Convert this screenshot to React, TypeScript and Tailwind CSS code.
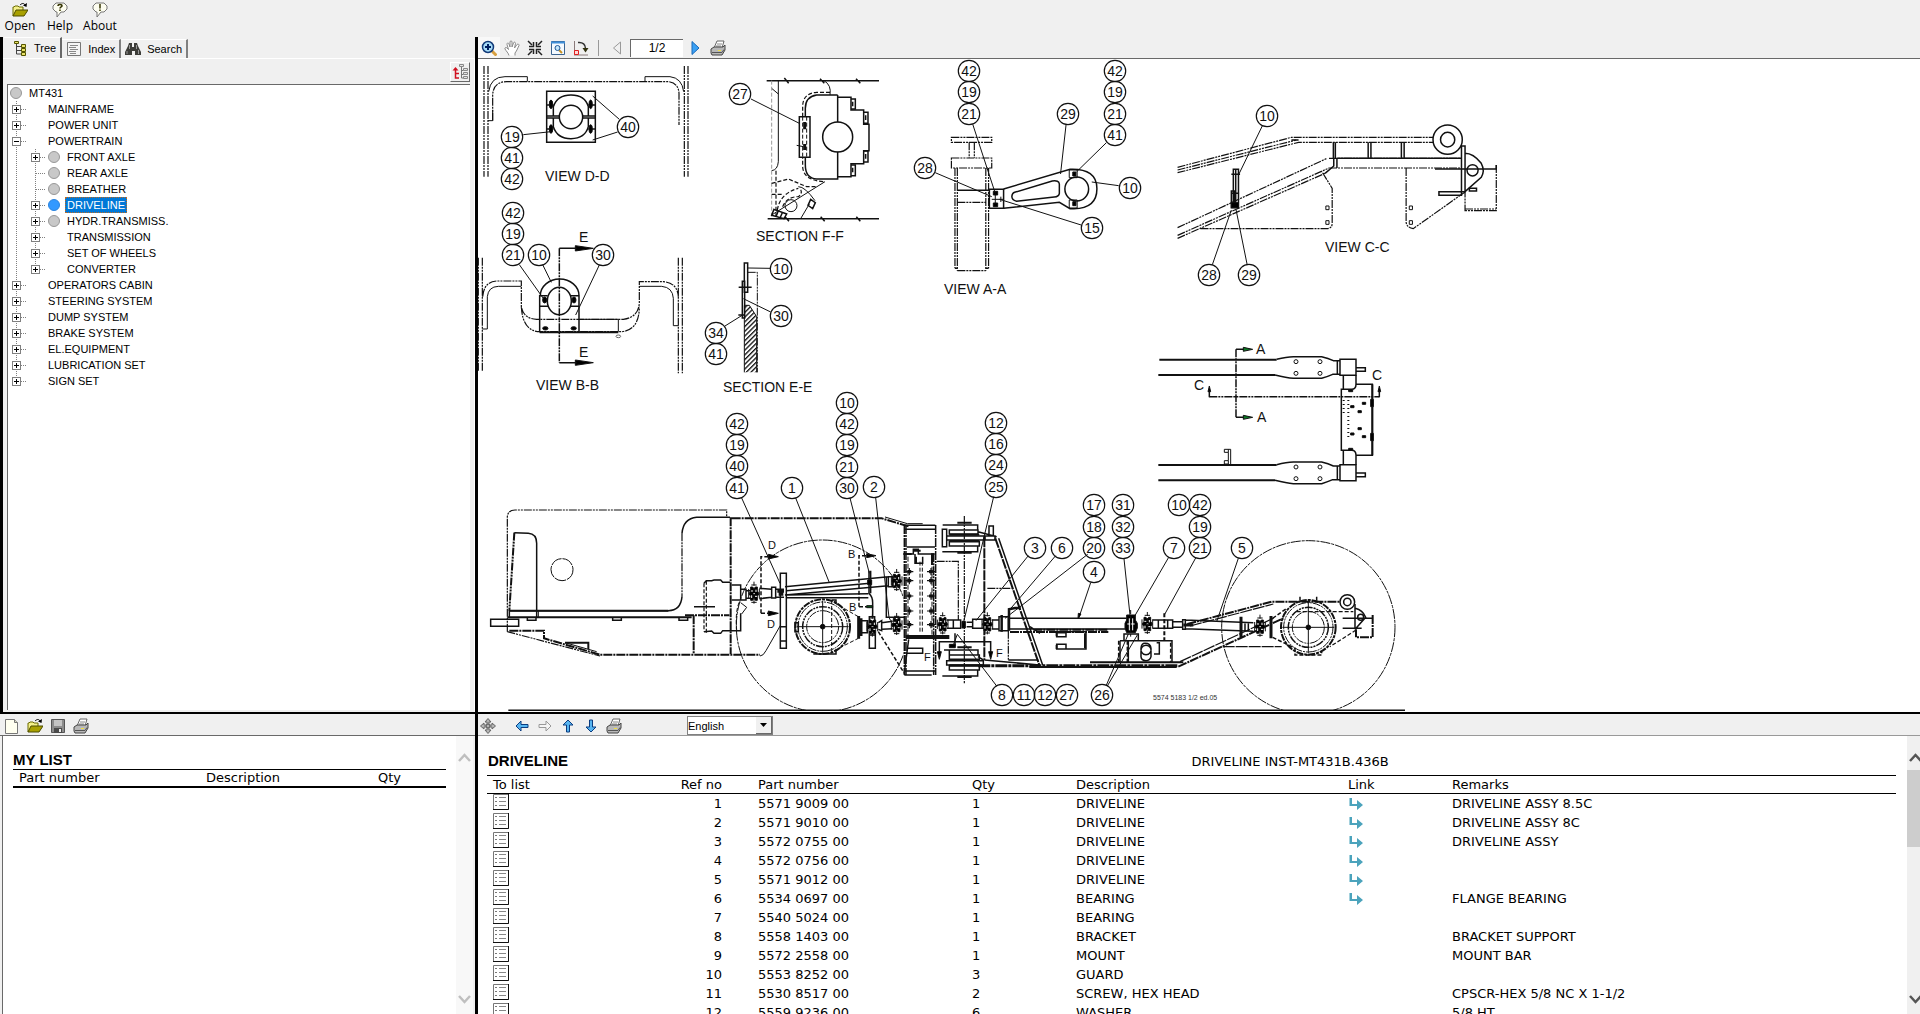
import type { ReactNode } from 'react'

type Node = { label: string; icon?: boolean; selected?: boolean; toggle?: '+' | '-'; children?: Node[] }

const tree: Node[] = [
  { label: 'MAINFRAME', toggle: '+' },
  { label: 'POWER UNIT', toggle: '+' },
  {
    label: 'POWERTRAIN',
    toggle: '-',
    children: [
      { label: 'FRONT AXLE', toggle: '+', icon: true },
      { label: 'REAR AXLE', icon: true },
      { label: 'BREATHER', icon: true },
      { label: 'DRIVELINE', toggle: '+', icon: true, selected: true },
      { label: 'HYDR.TRANSMISS.', toggle: '+', icon: true },
      { label: 'TRANSMISSION', toggle: '+' },
      { label: 'SET OF WHEELS', toggle: '+' },
      { label: 'CONVERTER', toggle: '+' },
    ],
  },
  { label: 'OPERATORS CABIN', toggle: '+' },
  { label: 'STEERING SYSTEM', toggle: '+' },
  { label: 'DUMP SYSTEM', toggle: '+' },
  { label: 'BRAKE SYSTEM', toggle: '+' },
  { label: 'EL.EQUIPMENT', toggle: '+' },
  { label: 'LUBRICATION SET', toggle: '+' },
  { label: 'SIGN SET', toggle: '+' },
]

const parts = [
  { ref: 1, no: '5571 9009 00', qty: 1, desc: 'DRIVELINE', link: true, remarks: 'DRIVELINE ASSY 8.5C' },
  { ref: 2, no: '5571 9010 00', qty: 1, desc: 'DRIVELINE', link: true, remarks: 'DRIVELINE ASSY 8C' },
  { ref: 3, no: '5572 0755 00', qty: 1, desc: 'DRIVELINE', link: true, remarks: 'DRIVELINE ASSY' },
  { ref: 4, no: '5572 0756 00', qty: 1, desc: 'DRIVELINE', link: true, remarks: '' },
  { ref: 5, no: '5571 9012 00', qty: 1, desc: 'DRIVELINE', link: true, remarks: '' },
  { ref: 6, no: '5534 0697 00', qty: 1, desc: 'BEARING', link: true, remarks: 'FLANGE BEARING' },
  { ref: 7, no: '5540 5024 00', qty: 1, desc: 'BEARING', link: false, remarks: '' },
  { ref: 8, no: '5558 1403 00', qty: 1, desc: 'BRACKET', link: false, remarks: 'BRACKET SUPPORT' },
  { ref: 9, no: '5572 2558 00', qty: 1, desc: 'MOUNT', link: false, remarks: 'MOUNT BAR' },
  { ref: 10, no: '5553 8252 00', qty: 3, desc: 'GUARD', link: false, remarks: '' },
  { ref: 11, no: '5530 8517 00', qty: 2, desc: 'SCREW, HEX HEAD', link: false, remarks: 'CPSCR-HEX 5/8 NC X 1-1/2' },
  { ref: 12, no: '5559 9236 00', qty: 6, desc: 'WASHER', link: false, remarks: '5/8 HT' },
]

/* ---------- icons ---------- */

function Icon({ children }: { children: ReactNode }) {
  return (
    <svg className="w-4 h-4 shrink-0" viewBox="0 0 16 16" fill="none" aria-hidden="true">
      {children}
    </svg>
  )
}

const FolderIcon = () => (
  <Icon>
    <path d="M1 14V5h1l1-1h3l1 1h4v3" fill="#f4f08a" stroke="#6b6b00" />
    <path d="M1 14 4 8h12l-4 6z" fill="#a8a000" stroke="#4d4d00" />
    <path d="M8 3c2-2 4-2 5 0" stroke="#000" />
    <path d="m15 1-.5 4L11 3.500z" fill="#000" />
  </Icon>
)

function BubbleIcon({ mark }: { mark: '?' | '!' }) {
  return (
    <Icon>
      <path d="M4 1h8l3 3v3l-3 3H9l-4 5V10H4L1 7V4z" fill="#fdfdf0" stroke="#777" />
      {mark === '?' ? (
        <path d="M6 4c0-2 4-2 4 0 0 1-2 1-2 2.500M8 7.500V9" stroke="#333300" strokeWidth="1.500" />
      ) : (
        <path d="M8 2v4.500M8 7.500V9" stroke="#333300" strokeWidth="1.500" />
      )}
    </Icon>
  )
}

const TreeIcon = () => (
  <Icon>
    <path d="M4.500 4v10H10M4.500 6.500H10M4.500 10.500H10" stroke="#444" />
    <path d="M2.500 1.500h4v2h-4zM9.500 4.500h4v3h-4zM9.500 8.500h4v3h-4zM9.500 12.500h4v3h-4z" fill="#e8e26a" stroke="#555500" />
  </Icon>
)

const IndexIcon = () => (
  <Icon>
    <path d="M1.500 1.500h13v13h-13z" fill="#f4f4f4" stroke="#777" />
    <path d="M4 4.500h8M3 6.500h7M4 8.500h8M3 10.500h7M4 12.500h6" stroke="#888" />
  </Icon>
)

const BinocularsIcon = () => (
  <Icon>
    <path d="M4 2h3v4h2V2h3l1 3 3 6v3h-6v-4H7v4H0v-3l3-6z" fill="#3c3c38" />
    <path d="M4.500 4v4M11.500 4v4M2 10v3M13.500 9v4" stroke="#999" />
  </Icon>
)

const SyncTreeIcon = () => (
  <Icon>
    <path d="M9.500 3v11h2M9.500 6.500h2M9.500 10.500h2" stroke="#777" />
    <path d="M7.500.500h4v2h-4zM11.500 4.500h4v2h-4zM11.500 8.500h4v2h-4zM11.500 12.500h4v2h-4z" fill="#e4e4e4" stroke="#888" />
    <path d="M3.500 6v8H7M3.500 9.500H7" stroke="#d01020" strokeWidth="1.500" />
    <path d="M3.500 3 6.500 6.500h-6z" fill="#d01020" />
  </Icon>
)

const ZoomIcon = () => (
  <Icon>
    <path d="m10.500 10.500 5 5" stroke="#d8a040" strokeWidth="3" />
    <circle cx="7" cy="7" r="5.500" fill="#a8dcf8" stroke="#123a78" strokeWidth="1.500" />
    <path d="M4 7h6M7 4v6" stroke="#001f60" strokeWidth="2" />
  </Icon>
)

const HandIcon = () => (
  <Icon>
    <path
      d="M5 15.500C4.500 13 2 11 1 9c-.500-1.500 1-2 2-1l1.500 1.500L3 4.500C2.500 3 4.500 2.500 5 4l1 3V2c0-1.500 2-1.500 2 0v5l1.500-4c.500-1.500 2-1 2 .500L10.500 8 13 4.500c1-1 2.500 0 2 1-1 2-2 5-4 7.500v2.500"
      fill="#fff"
      stroke="#8a8a8a"
    />
  </Icon>
)

const ShrinkIcon = () => (
  <Icon>
    <path d="m1 1 4 4M15 1l-4 4M1 15l4-4M15 15l-4-4" stroke="#222" strokeWidth="1.500" />
    <path d="M2 6.500h4.500V2M14 6.500H9.500V2M2 9.500h4.500V14M14 9.500H9.500V14" stroke="#222" strokeWidth="1.500" />
  </Icon>
)

const FitIcon = () => (
  <Icon>
    <path d="M1.500 1.500h13v13h-13z" fill="#f4faff" stroke="#3c6490" />
    <path d="M1 2.500h14" stroke="#3f8fd8" strokeWidth="2" />
    <path d="m9 10 3 3" stroke="#c89020" strokeWidth="2" />
    <circle cx="7.500" cy="8" r="2.500" fill="#c4e6fa" stroke="#205898" />
  </Icon>
)

const RotateIcon = () => (
  <Icon>
    <path d="M1.500 1v14M1 15h14" stroke="#8a7a7a" />
    <path d="M1.500 10.500h4v4h-4z" fill="#ffd8d8" stroke="#e02020" />
    <path d="M5 2.500c5-.500 7.500 2 7.500 6" stroke="#333" strokeWidth="1.500" />
    <path d="M9.500 8h6l-3 4.500z" fill="#333310" />
  </Icon>
)

const PrinterIcon = () => (
  <Icon>
    <path d="M4 8 7 1h7l-2 7" fill="#fff" stroke="#666" />
    <path d="M7 4h5M6 6h5" stroke="#888" />
    <path d="m1 9 3-2h9l2-2v5l-3 5H2l-1-2z" fill="#b8b8b8" stroke="#444" />
    <path d="M2 12.500h10l2-3" stroke="#555" />
    <path d="M8 10.500h3" stroke="#f0e040" />
  </Icon>
)

const NewIcon = () => (
  <Icon>
    <path d="M1.500 1.500h9l3 3v11h-12z" fill="#fffff0" stroke="#777" />
    <path d="M10.500 1.500v3h3" fill="#d8d8c0" stroke="#777" />
  </Icon>
)

const SaveIcon = () => (
  <Icon>
    <path d="M1.500 1.500h13v13h-13z" fill="#8c8c8c" stroke="#555" />
    <path d="M4 2h8v6H4z" fill="#c4c4c4" />
    <path d="M4 10h8v5H4z" fill="#4a4a4a" />
    <path d="M9 11h2v3H9z" fill="#eee" />
  </Icon>
)

const MoveIcon = () => (
  <Icon>
    <path d="M8 .500 11 4H9v3h3V5l3.500 3-3.500 3V9H9v3h2l-3 3.500L5 12h2V9H4v2L.500 8 4 5v2h3V4H5z" fill="#b4b4b4" stroke="#666" />
    <circle cx="8" cy="8" r="2" stroke="#666" />
  </Icon>
)

function ArrowIcon({ turn, off }: { turn: number; off?: boolean }) {
  return (
    <Icon>
      <path
        d="M2 8 7 3v3.500h7v3H7V13z"
        transform={`rotate(${turn} 8 8)`}
        fill={off ? '#f4f4f4' : '#56b4f0'}
        stroke={off ? '#999' : '#0a3c80'}
      />
    </Icon>
  )
}

const AddToListIcon = () => (
  <Icon>
    <path d="M.500.500h15v15H.500z" fill="#fff" stroke="#777" />
    <path d="M15.500 0v15.500H0" stroke="#111" />
    <path d="M6 3.500h7M6 7.500h7M6 11.500h7" stroke="#888" />
    <path d="M2 3.500h2M2 7.500h2M2 11.500h2" stroke="#777" />
  </Icon>
)

const LinkIcon = () => (
  <Icon>
    <path d="M1.500 2h2.500v6h5V4l6 5-6 5v-4H1.500z" fill="#4ba3bc" />
  </Icon>
)

function ScrollArrow({ down, color }: { down?: boolean; color: string }) {
  return (
    <svg className="w-[17px] h-4" viewBox="0 0 17 16" fill="none" aria-hidden="true">
      <path d={down ? 'm3 5 5.500 6L14 5' : 'm3 11 5.500-6L14 11'} stroke={color} strokeWidth="2.500" />
    </svg>
  )
}

function ToolButton({ label, children }: { label: string; children: ReactNode }) {
  return (
    <button type="button" aria-label={label} title={label} className="flex items-center justify-center w-[23px] h-5">
      {children}
    </button>
  )
}

/* ---------- tree ---------- */

function Connector({ toggle, last }: { toggle?: '+' | '-'; last?: boolean }) {
  return (
    <svg className="w-[19px] h-4 shrink-0" viewBox="0 0 19 16" fill="none" shapeRendering="crispEdges" aria-hidden="true">
      <path d={last ? 'M8.500 0v8' : 'M8.500 0v16'} stroke="#808080" strokeDasharray="1 1" />
      <path d="M9 8.500h10" stroke="#808080" strokeDasharray="1 1" />
      {toggle && (
        <>
          <path d="M4.500 4.500h8v8h-8z" fill="#fff" stroke="#808080" />
          <path d="M6 8.500h5" stroke="#000" />
          {toggle === '+' && <path d="M8.500 6v5" stroke="#000" />}
        </>
      )}
    </svg>
  )
}

function NodeIcon({ selected }: { selected?: boolean }) {
  return (
    <svg className="w-[19px] h-4 shrink-0" viewBox="0 0 19 16" aria-hidden="true">
      <circle cx="8" cy="8" r="5.500" fill={selected ? '#3399ff' : '#c8c8c8'} stroke={selected ? '#2a84e0' : '#989898'} />
    </svg>
  )
}

function TreeRow({ node, depth, last }: { node: Node; depth: number; last: boolean }) {
  return (
    <li role="treeitem" aria-selected={!!node.selected} aria-expanded={node.toggle ? node.toggle === '-' : undefined}>
      <div className="flex items-center h-4">
        {depth > 0 && (
          <svg className="w-[19px] h-4 shrink-0" viewBox="0 0 19 16" shapeRendering="crispEdges" aria-hidden="true">
            <path d="M8.500 0v16" stroke="#808080" strokeDasharray="1 1" />
          </svg>
        )}
        <Connector toggle={node.toggle} last={last} />
        {node.icon ? <NodeIcon selected={node.selected} /> : <span className="w-[19px]" />}
        <span
          className={
            node.selected
              ? 'h-4 leading-4 px-0.5 bg-[#0078d7] text-white outline-1 -outline-offset-1 outline-dotted outline-[#c06a20]'
              : 'h-4 leading-4 px-0.5'
          }
        >
          {node.label}
        </span>
      </div>
      {node.children && (
        <ul role="group">
          {node.children.map((c, i) => (
            <TreeRow key={c.label} node={c} depth={depth + 1} last={i === node.children!.length - 1} />
          ))}
        </ul>
      )}
    </li>
  )
}

/* ---------- drawing ---------- */

const balloons: [number, number, number][] = [
  [19, 512, 137], [41, 512, 158], [42, 512, 179], [40, 628, 127],
  [42, 513, 213], [19, 513, 234], [21, 513, 255], [10, 539, 255], [30, 603, 255],
  [27, 740, 94],
  [10, 781, 269], [30, 781, 316], [34, 716, 333], [41, 716, 354],
  [42, 969, 71], [19, 969, 92], [21, 969, 114], [29, 1068, 114],
  [42, 1115, 71], [19, 1115, 92], [21, 1115, 114], [41, 1115, 135],
  [28, 925, 168], [10, 1130, 188], [15, 1092, 228],
  [10, 1267, 116], [28, 1209, 275], [29, 1249, 275],
  [42, 737, 424], [19, 737, 445], [40, 737, 466], [41, 737, 488],
  [1, 792, 488],
  [10, 847, 403], [42, 847, 424], [19, 847, 445], [21, 847, 467], [30, 847, 488],
  [2, 874, 487],
  [12, 996, 423], [16, 996, 444], [24, 996, 465], [25, 996, 487],
  [3, 1035, 548], [6, 1062, 548],
  [17, 1094, 505], [18, 1094, 527], [20, 1094, 548], [4, 1094, 572],
  [31, 1123, 505], [32, 1123, 527], [33, 1123, 548],
  [7, 1174, 548], [10, 1179, 505], [42, 1200, 505], [19, 1200, 527], [21, 1200, 548],
  [5, 1242, 548],
  [8, 1002, 695], [11, 1024, 695], [12, 1045, 695], [27, 1067, 695], [26, 1102, 695],
]

const PHANTOM = '8 1 2 1 2 1'
const DASH = '4 2'

function SectionViews() {
  return (
    <g transform="translate(470 30) scale(.33333)">
      {/* D-D */}
      <path strokeDasharray={PHANTOM} strokeWidth="1.200" d="M42 108V440M54 108V440M643 108V440M654 108V440M68 272V195Q70 155 110 155H595Q625 158 627 190V285" />
      <path d="M54 272H68V240M56 185Q62 140 105 140H172V155M525 155V140H600Q636 144 641 185" />
      <path strokeWidth="1.500" d="M230 184H376V337H230ZM230 258H268M338 258H376M230 264H268M338 264H376M230 225H250M355 225H376M230 297H250M355 297H376" />
      <path strokeWidth="1.500" d="M250 258V230Q262 195 303 195Q345 195 355 230V258M250 264V290Q262 326 303 326Q345 326 355 290V264" />
      <circle cx="303" cy="261" r="35" fill="#fff" strokeWidth="1.500" />
      <g fill="#000">
        <ellipse cx="243" cy="223" rx="5" ry="13" />
        <ellipse cx="362" cy="223" rx="5" ry="13" />
        <ellipse cx="243" cy="297" rx="5" ry="13" />
        <ellipse cx="362" cy="297" rx="5" ry="13" />
      </g>
      <path d="M160 314 243 305M448 268 368 198M443 306 368 330" />

      {/* B-B */}
      <path strokeDasharray={PHANTOM} strokeWidth="1.200" d="M25 683V1025M37 683V1025M625 683V1030M637 683V1030M38 800Q42 755 80 753H154V830Q160 866 200 868H460Q505 862 508 820V755H580Q622 758 625 800M154 830Q158 905 210 905H455Q508 900 508 830" />
      <path d="M37 897H52V800Q55 770 85 769H154M508 769H575Q608 772 610 805V887H625M330 868H445V905" />
      <path strokeWidth="2" d="M209 907H445" />
      <path strokeWidth="1.500" d="M209 907V797H233M302 797H327V907M211 797A58 50 0 0 1 327 797M209 829H235M302 829H327" />
      <ellipse cx="268" cy="813" rx="36" ry="41" strokeWidth="1.500" />
      <g fill="#000">
        <ellipse cx="224" cy="810" rx="6" ry="9" />
        <ellipse cx="312" cy="810" rx="6" ry="9" />
        <ellipse cx="226" cy="895" rx="8" ry="5" />
        <ellipse cx="311" cy="895" rx="8" ry="5" />
        <path d="M316 647 370 655 316 663ZM316 990 370 998 316 1006Z" />
      </g>
      <path strokeDasharray={PHANTOM} strokeWidth="1.500" d="M268 655V998" />
      <path strokeWidth="1.500" d="M268 655H320M268 998H320" />
      <ellipse cx="445" cy="919" rx="7" ry="4" stroke="#666" />
      <path d="M148 704 222 808M218 704 244 757M388 705 317 855" />

      {/* F-F */}
      <path strokeWidth="1.500" d="M890 152H1227M893 566H1227M943 144 956 160M1050 146 1063 160M1158 146 1171 160M945 560 957 574M1052 560 1064 574M1159 560 1171 574" />
      <path d="M925 152V395Q923 420 905 422M905 175 925 192M1062 152Q1085 165 1080 195" />
      <path strokeDasharray={DASH} stroke="#999" d="M905 152V566" />
      <path strokeDasharray={DASH} strokeWidth="1.200" d="M918 422V560M1080 187H1040Q998 190 998 230V410Q1000 452 1064 455" />
      <path strokeWidth="1.500" d="M1103 195H1040Q1006 200 1006 235V405Q1006 445 1040 447H1103V365M1103 277V195M1103 202H1143V240H1181V283H1197V362H1181V401H1143V440H1103" />
      <path strokeWidth="1.500" d="M1143 207h13v30h-13M1181 247h13v33h-13M1181 363h13v33h-13M1143 405h13v32h-13M1148 215v14M1187 256v14M1187 372v14M1148 413v14" />
      <circle cx="1103" cy="321" r="45" strokeWidth="1.500" />
      <path d="M988 260H1020V382H988Z" fill="#fff" strokeWidth="1.500" />
      <path strokeDasharray={DASH} d="M998 260V382M1010 260V382" />
      <path strokeWidth="3" d="M1004 276V298M1004 342V360" />
      <path d="M843 207 988 280M1065 455 905 555M985 470Q1005 470 1035 512M1018 522 992 566M980 346 1000 350" />
      <path strokeDasharray={DASH} strokeWidth="1.200" d="M905 460 955 447 1010 470H1040M905 493H940M922 540Q930 490 985 475M938 530Q950 500 985 500Q1000 490 990 475" />
      <circle cx="963" cy="527" r="18" />
      <path strokeWidth="1.500" d="M1022 508 1036 518 1028 536 1014 526ZM912 538 950 552 942 566 905 556ZM925 542 918 560M938 546 930 564" />

      {/* E-E */}
      <path strokeWidth="1.500" d="M823 699H833V787H823ZM817 754H824V864H817ZM806 772H845M805 855H826" />
      <path strokeDasharray={PHANTOM} d="M833 727H862V1027" />
      <path d="M823 1027V826H838L860 860V1027" fill="url(#hatch)" />
      <path d="M900 715 833 714M902 846 820 806M765 888 818 855" />
    </g>
  )
}

function ArmViews() {
  return (
    <g transform="translate(900 40) scale(.39541 .33333)">
      {/* A-A */}
      <path strokeDasharray={PHANTOM} strokeWidth="1.200" d="M130 292H232V307H130ZM130 354H232V384H130ZM139 384V685M145 384V692M217 384V692M224 384V685M145 692H217M145 487H217M175 307V354M188 307V354" />
      <path strokeWidth="1.500" d="M145 451H228M226 448H262V505H226ZM139 685H145M217 685H224" />
      <path strokeWidth="1.500" d="M262 447 430 388Q498 385 498 446Q498 505 440 506H430L403 487 262 505M290 457 385 423Q402 420 403 432V460Q402 470 390 471L295 484Q282 480 283 468Q284 459 290 457Z" />
      <ellipse cx="447" cy="447" rx="30" ry="36" strokeWidth="1.500" />
      <path d="M428 390H448V413H428ZM428 480H448V504H428ZM232 478H262M241 465V490M255 470V486" />
      <path fill="#000" d="M437 396h8v12h-8zM437 485h8v12h-8zM236 454h11v11h-11zM236 489h11v11h-11z" />
      <path d="M184 253 241 460M89 398 232 470M420 254 406 402M522 308 447 395M553 437 485 426M458 555 252 478" />

      {/* C-C */}
      <path strokeDasharray={PHANTOM} strokeWidth="1.200" d="M702 382 990 292H1350M702 390 1002 300M702 398 1008 307H1350M702 563 1080 355M702 586 1085 384M702 595 1075 400M1085 355H1420M1085 384H1420M760 566H1080Q1093 565 1093 550V445L1067 395M1280 384V545Q1280 562 1298 566L1430 455M1508 375V512H1429V455M1429 507H1508" />
      <path strokeWidth="1.500" d="M1096 307V355M1101 307V355M1184 307V355M1191 307V355M1268 307V355M1275 307V355M1105 355V384M1075 400 1097 378V355M990 300H1008M1105 355H1420M1353 387H1508V375M1363 455H1420V466H1363ZM1440 445H1458V453H1440Z" />
      <path d="M1077 498h8v11h-8zM1077 542h8v11h-8zM1288 498h8v11h-8zM1288 542h8v11h-8z" />
      <ellipse cx="1385" cy="299" rx="37" ry="44" fill="#fff" strokeWidth="1.500" />
      <ellipse cx="1385" cy="299" rx="18" ry="22" strokeWidth="1.500" />
      <path strokeWidth="1.500" d="M1420 318H1429V455H1420ZM1429 340Q1450 340 1470 370Q1480 392 1470 412L1429 455" />
      <ellipse cx="1448" cy="391" rx="14" ry="17" strokeWidth="1.500" />
      <path strokeWidth="1.500" d="M843 388H856V503H843ZM849 388V503M838 403H860M838 453H846V503H838ZM838 460H858" />
      <path fill="#000" d="M838 488H856V503H838Z" />
      <path d="M917 256 856 405M790 674 838 510M878 674 850 510" />
    </g>
  )
}

function PlanView() {
  const beam =
    'M410 88Q440 80 460 80H545Q565 85 580 92H600M405 135Q440 144 460 145H545Q562 140 578 133H600M592 92H600V133H592ZM600 88H648V136H600ZM648 113H676V124H648Z'
  return (
    <g transform="translate(1140 330) scale(.33333)">
      <path strokeWidth="2" d="M58 89H410M55 135H405M55 405H410M55 451H405" />
      <path strokeWidth="1.500" d={beam} />
      <path strokeWidth="1.500" d={beam} transform="translate(0 316)" />
      {[95, 130, 411, 446].map(y => (
        <g key={y}>
          <circle cx="468" cy={y} r="6" />
          <circle cx="540" cy={y} r="6" />
        </g>
      ))}
      <path strokeWidth="1.500" d="M610 136V178M648 136V163M610 361V404M648 376V404M604 178H635Q648 178 648 163H697V376H648Q648 361 635 361H604Z" />
      <path strokeWidth="2" d="M697 163V376" />
      <path fill="#000" d="M626 180h12v5h-12zM626 355h12v5h-12zM667 217h10v6h-10zM632 227h10v6h-10zM654 242h10v6h-10zM654 293h10v6h-10zM632 309h10v6h-10zM667 317h10v6h-10zM692 208h8v22h-8zM692 310h8v22h-8z" />
      <path strokeWidth="2" strokeDasharray="1 3" d="M625 210V330M611 210V256" />
      <path d="M253 358H272V402M253 358V367H265V358M253 392H265V402H253ZM265 367V392" />
      <path strokeDasharray={PHANTOM} strokeWidth="1.500" d="M288 58V262M208 200H718" />
      <path strokeWidth="1.500" d="M288 58H312M288 262H312M208 202V180M718 202V180" />
      <path fill="#0a7a24" d="M310 52 338 58 310 64ZM310 256 338 262 310 268Z" />
      <path fill="#000" d="M204 185 208 168 212 185ZM714 185 718 168 722 185Z" />
    </g>
  )
}

function Bolt({ x, y }: { x: number; y: number }) {
  return <path strokeWidth="1.200" d={`M${x - 12} ${y}h24M${x} ${y - 11}v22M${x - 4} ${y - 3}h8v6h-8z`} />
}

// universal joint as seen from the side
function Joint({ x, y }: { x: number; y: number }) {
  return (
    <g>
      <path fill="#000" d={`M${x - 10} ${y - 20}h6l4 6 4-6h6v12l5 8-5 8v12h-6l-4-6-4 6h-6v-12l-5-8 5-8z`} />
      <path stroke="#fff" d={`M${x - 9} ${y - 8}h6M${x + 3} ${y + 8}h6M${x - 2} ${y}h5M${x + 6} ${y - 12}v7M${x - 7} ${y + 5}v8`} />
      <path d={`M${x} ${y - 36}V${y + 36}`} strokeDasharray={DASH} />
      <path d={`M${x - 8} ${y - 26}h16M${x - 8} ${y + 26}h16M${x - 16} ${y - 14}v28M${x + 16} ${y - 14}v28`} />
    </g>
  )
}

function AxleHub({ x, y }: { x: number; y: number }) {
  return (
    <g>
      <circle cx={x} cy={y} r="82" strokeWidth="2" strokeDasharray="7 1 3 1" />
      <circle cx={x} cy={y} r="74" strokeDasharray={PHANTOM} />
      <circle cx={x} cy={y} r="60" strokeDasharray={PHANTOM} strokeWidth="1.500" />
      <circle cx={x} cy={y} r="48" strokeDasharray={PHANTOM} />
      <circle cx={x} cy={y} r="7" fill="#000" />
      <path d={`M${x - 78} ${y}h156M${x} ${y - 78}v156`} />
    </g>
  )
}

function RearFrame() {
  return (
    <g transform="translate(470 380) scale(.33333)">
      <path strokeDasharray={PHANTOM} strokeWidth="1.200" d="M112 755V410Q114 390 135 390H770V412M636 460V650M112 755 390 828" />
      <path strokeDasharray={PHANTOM} strokeWidth="2" d="M133 458 118 692" />
      <path strokeWidth="1.500" d="M780 412H680Q640 416 636 460M636 650Q632 692 595 692H118V712M133 458 175 460Q200 462 200 490V712M62 718H146V739H62ZM172 712V721H198V712M428 712V721H454V712M627 712V721H653V712" />
      <path strokeWidth="2" d="M112 712H665M118 692H595" />
      <circle cx="276" cy="569" r="33" strokeDasharray="12 1" />
      <path strokeWidth="2" strokeDasharray="9 1 2 1" d="M118 752H222V775L390 824H870M645 706H778M671 706V822M782 412V822M785 415H1235L1318 440" />
      <path strokeWidth="2" d="M285 788H355V808" />
      <path d="M285 788 380 815M1245 411 1312 431H1358M870 828Q880 828 888 812L932 735M205 692V712" />

      {/* transmission */}
      <path strokeDasharray={DASH} strokeWidth="1.200" d="M702 610V755M709 602V760" />
      <path strokeWidth="1.500" d="M702 610 709 602H725L732 600H752L758 607H780M702 755 725 753 732 760H752L758 752H812V700M785 615H812V660H785M812 628H828V660H808M828 632H843M828 655H843M672 680H735" />
      <path strokeDasharray={DASH} d="M800 750Q795 690 810 662" />
      <path d="M812 668 830 682 815 702" />
      <Joint x={852} y={641} />
      <path strokeWidth="1.500" d="M868 625 905 628M868 656 905 652M905 622H917V654H905ZM917 628H942M917 652H942M931 580H949V805H931ZM931 740H949M931 783H949" />
      <path strokeWidth="3" d="M922 634H942M926 643H940" />
      <path strokeWidth="1.500" d="M945 620 1255 590M945 645 1255 617M949 632 1200 610M949 653H1195M949 645 1195 641M1255 590H1267V620H1255Z" />
      <Joint x={1280} y={603} />
      <path strokeDasharray={DASH} strokeWidth="1.500" d="M873 700V530H898M1167 680V527H1190M1167 680H1190M873 700H898" />
      <path fill="#000" d="M895 523 925 530 895 537ZM895 693 925 700 895 707ZM1190 521 1218 527 1190 533Z" />
      <path fill="#0a5a1a" d="M1190 677h18v6h-18z" />
      <path strokeWidth="1.500" d="M1197 572V640Q1208 650 1208 668V712M1202 572V640M1198 762H1216V805H1198ZM1198 710H1214V730H1198ZM1249 590V712H1303" />
      <path fill="#000" d="M1193 600h12v14h-12z" />

      {/* wheel */}
      <clipPath id="rearWheel">
        <path d="M780 460H1300V992H780Z" />
      </clipPath>
      <circle cx="1057" cy="738" r="258" strokeDasharray="10 1 3 1" clipPath="url(#rearWheel)" />
      <AxleHub x={1058} y={740} />
      <path strokeDasharray={DASH} d="M1085 660V820M1092 668 1165 710M1092 812 1165 775" />
      <path strokeWidth="1.500" d="M975 728H985V755H975ZM1030 822H1098V810M1085 660H1098V672" />
      <path strokeWidth="3" d="M1166 708V776M1173 715V768" />
      <path strokeWidth="1.500" d="M1175 722H1192V758H1175M1225 728 1235 722V752L1225 748M1235 728 1268 724M1235 748 1268 746" />
      <Joint x={1207} y={740} />
      <Joint x={1280} y={735} />
      <path strokeDasharray={DASH} strokeWidth="1.500" d="M1225 755 1303 880" />

      {/* articulation column */}
      <path strokeWidth="1.500" strokeDasharray="9 1 2 1" d="M1303 435V885M1308 435V885M1397 435V885M1391 520V885" />
      <path strokeDasharray={DASH} d="M1350 545V760M1357 545V760" />
      <path strokeWidth="1.500" d="M1303 436H1396M1303 448H1396M1310 501H1395M1303 522H1330V508H1345V522H1394M1303 885H1385M1303 873H1396M1310 805H1358V820H1310M1316 778 1303 878M1335 522V550H1358V530" />
      <path strokeWidth="2" d="M1300 522H1325M1330 512H1352M1338 530V550M1386 520V555" />
      <path strokeWidth="2" d="M1310 768H1435V774H1310Z" />
      {[575, 602, 648, 693, 734].map(y => (
        <g key={y}>
          <Bolt x={1318} y={y} />
          <Bolt x={1383} y={y} />
        </g>
      ))}
      <path strokeDasharray="5 2" d="M1314 530V765M1386 560V765" />

      <path d="M815 354 930 610M977 354 1078 608M1140 354 1198 580M1217 353 1257 712M1257 712 1262 722" />
      <path strokeWidth="1.500" d="M115 991H2805" />
    </g>
  )
}

function FrontFrame() {
  return (
    <g transform="translate(900 400) scale(.33333)">
      {/* hinge */}
      <path strokeDasharray={PHANTOM} strokeWidth="1.200" d="M193 348V850M110 484H175V660M262 565H335M325 692V780" />
      <path strokeWidth="1.500" d="M128 375H233V390M148 390H234V402H148ZM140 408H255V420H140ZM148 425H238V438H148ZM127 388H140V440H127ZM127 455H233V438M234 395 290 410M253 408H285V420H253ZM267 378H280V408H267ZM132 750H234V765H148V750M148 765H238V778H148ZM140 782H250V795H140ZM148 798H238V810H148ZM127 828H233V810M234 770 250 780" />
      <path strokeWidth="2" d="M172 368H215M172 458H215M172 742H215M172 831H215M148 404H238M148 423H238M148 780H238M148 796H238" />

      {/* mast and chassis */}
      <path strokeWidth="2" strokeDasharray="10 1" d="M286 415 418 795M253 412V780" />
      <path strokeWidth="1.500" d="M296 415 428 795M253 780 418 795M325 780H415" />
      <path strokeWidth="3" strokeDasharray="12 1 3 1" d="M235 797H835" />
      <path strokeWidth="2" d="M570 787H850M388 801H830" />
      <path strokeWidth="2" strokeDasharray="9 1 2 1" d="M835 800 1150 655M862 672 1115 605H1320" />
      <path strokeWidth="1.200" d="M840 785 1120 655M870 678 1120 612M968 740H1145" strokeDasharray="12 1" />

      {/* shafts */}
      <Joint x={128} y={673} />
      <Joint x={262} y={673} />
      <Joint x={742} y={672} />
      <Joint x={1080} y={680} />
      <path strokeWidth="1.500" d="M140 660H182V685H140M160 660V685M200 667H218M200 680H218M218 658H250V685H218ZM275 660H297M275 687H297M297 650H325V692H297ZM327 655H680M327 687H680M390 680 420 700" />
      <path strokeWidth="2.500" d="M327 692V628L345 624H362M305 645V695" />
      <path fill="#000" d="M186 664h10v20h-10z" />
      <path strokeWidth="2" strokeDasharray="9 1 2 1" d="M330 696H625M400 689H625" />
      <path strokeWidth="1.500" d="M470 695H558V747H470M470 698H498V710H470ZM470 733H498V747H470Z" />
      <path strokeWidth="2" d="M555 700V745M470 735V747M470 698V709" />
      <path fill="#000" d="M680 645h26v15l6 10v14l-6 14h-26l-5-14v-14l5-10z" />
      <path stroke="#fff" d="M688 655v36M698 655v36M682 672h22" />
      <path strokeDasharray={DASH} d="M692 630V710" />
      <path strokeWidth="1.500" d="M672 720V702H715V720M660 722H816V788M660 722V788M685 722V788M735 730Q752 730 753 745V770Q750 782 738 782Q724 782 723 770V745Q724 730 735 730ZM738 736A15 14 0 1 0 738.100 736M770 728H778V762H762" />
      <path strokeDasharray={DASH} strokeWidth="1.500" d="M656 722V788M682 722V788M812 728V788" />
      <path strokeWidth="1.500" d="M758 660H818V685H758M775 660V685M803 660V685M818 665H848M818 682H848M848 659H856V688H848ZM856 660 1060 668M856 686 1060 694M1035 668V694M1045 668V694" />
      <path strokeWidth="2" strokeDasharray={DASH} d="M793 640V722" />
      <path strokeWidth="3" d="M1023 650V712M1113 648V715M850 675H880" />

      {/* wheel */}
      <clipPath id="frontWheel">
        <path d="M950 400H1500V931H950Z" />
      </clipPath>
      <circle cx="1225" cy="682" r="260" strokeDasharray="10 1 3 1" clipPath="url(#frontWheel)" />
      <AxleHub x={1225} y={682} />
      <path strokeWidth="1.500" d="M1118 655 1160 625M1118 712 1185 745V765H1265V755M1200 590V605M1250 590V605" strokeDasharray={DASH} />
      <path strokeDasharray={DASH} d="M1190 635H1360M1368 690 1290 740" strokeWidth="1.200" />
      <circle cx="1342" cy="606" r="22" fill="#fff" strokeWidth="1.500" />
      <circle cx="1342" cy="606" r="11" strokeWidth="1.500" />
      <circle cx="1382" cy="652" r="9" strokeWidth="1.500" />
      <path strokeWidth="1.500" d="M1365 612V688M1366 625Q1388 630 1397 652L1368 685M1328 655H1418M1328 685H1385" />
      <path strokeWidth="2" strokeDasharray="9 1 2 1" d="M1418 645V712H1368V688" />

      <path strokeWidth="1.500" d="M118 760V725H272V760M165 700V735H150" />
      <path fill="#000" d="M112 755 118 778 124 755ZM266 755 272 778 278 755ZM148 733h18v10h-18z" />
      <path d="M281 290 190 670M385 467 228 662M467 467 330 628M563 463 315 655M572 548 536 655M672 476 690 645M806 472 703 650M887 474 793 645M1015 475 950 665M290 858 172 703 160 735M618 858 685 702M622 858 712 705" />
      <path fill="#000" d="M534 656 535 640 543 642Z" />
    </g>
  )
}

function Drawing() {
  return (
    <svg
      className="block w-full h-full font-['Liberation_Sans',Arial,sans-serif] [&_*]:[vector-effect:non-scaling-stroke]"
      viewBox="478 59 1442 652"
      preserveAspectRatio="xMinYMin meet"
      fill="none"
      stroke="#111"
      role="img"
      aria-label="Driveline exploded views"
    >
      <defs>
        <pattern id="hatch" width="10" height="10" patternUnits="userSpaceOnUse" patternTransform="rotate(45)">
          <path d="M0 0h4v10H0z" fill="#111" stroke="none" />
        </pattern>
      </defs>
      <SectionViews />
      <ArmViews />
      <PlanView />
      <RearFrame />
      <FrontFrame />

      {balloons.map(([n, x, y]) => (
        <g key={`${n}-${x}-${y}`}>
          <circle cx={x} cy={y} r="10.700" strokeWidth="1.200" />
          <text x={x} y={y + 5} fontSize="14" textAnchor="middle" fill="#111" stroke="none">
            {n}
          </text>
        </g>
      ))}

      <g fill="#111" stroke="none" fontSize="14">
        <text x="545" y="181">VIEW D-D</text>
        <text x="756" y="241">SECTION F-F</text>
        <text x="536" y="390">VIEW B-B</text>
        <text x="723" y="392">SECTION E-E</text>
        <text x="944" y="294">VIEW A-A</text>
        <text x="1325" y="252">VIEW C-C</text>
        <text x="579" y="242">E</text>
        <text x="579" y="357">E</text>
        <text x="1256" y="354">A</text>
        <text x="1257" y="422">A</text>
        <text x="1194" y="390">C</text>
        <text x="1372" y="380">C</text>
      </g>
      <g fill="#111" stroke="none" fontSize="11">
        <text x="768" y="549">D</text>
        <text x="767" y="628">D</text>
        <text x="848" y="558">B</text>
        <text x="849" y="611">B</text>
        <text x="924" y="661">F</text>
        <text x="996" y="657">F</text>
      </g>
      <text x="1153" y="700" fontSize="7" fill="#333" stroke="none">5574 5183 1/2 ed.05</text>
    </svg>
  )
}

/* ---------- page ---------- */

function LeftPane() {
  return (
    <aside className="flex flex-col w-[475px] shrink-0 border-l-[3px] border-black">
      <div role="tablist" className="flex items-end h-[22px] pl-px border-b border-white">
        <button type="button" role="tab" aria-selected="true" className="flex items-center gap-1.5 h-[21px] pl-2 pr-1 border-t border-t-white border-r-2 border-r-[#696969]">
          <TreeIcon />
          Tree
        </button>
        <button type="button" role="tab" aria-selected="false" className="flex items-center gap-1.5 h-[19px] px-1 border-t border-t-white border-r-2 border-r-[#808080]">
          <IndexIcon />
          Index
        </button>
        <button type="button" role="tab" aria-selected="false" className="flex items-center gap-1.5 h-[19px] px-1 border-t border-t-white border-r-2 border-r-[#808080]">
          <BinocularsIcon />
          Search
        </button>
      </div>
      <div className="flex flex-col flex-1 min-h-0 pl-1 pb-0.5 pr-1 border-r border-r-white">
        <div className="flex justify-end items-center h-[25px]">
          <button
            type="button"
            aria-label="Locate in tree"
            className="flex items-center justify-center w-5 h-5 border border-t-white border-l-white border-r-[#696969] border-b-[#696969]"
          >
            <SyncTreeIcon />
          </button>
        </div>
        <div className="flex-1 min-h-0 overflow-hidden bg-white border-t border-l border-[#696969]">
          <ul role="tree">
            <li role="treeitem">
              <div className="flex items-center h-4">
                <NodeIcon />
                <span className="px-0.5 leading-4">MT431</span>
              </div>
              <ul role="group">
                {tree.map((n, i) => (
                  <TreeRow key={n.label} node={n} depth={0} last={i === tree.length - 1} />
                ))}
              </ul>
            </li>
          </ul>
        </div>
      </div>
    </aside>
  )
}

function Viewer() {
  return (
    <section className="flex flex-col flex-1 min-w-0 border-l-[3px] border-black">
      <div className="flex items-center h-[22px] shrink-0 border-b border-[#696969]">
        <button type="button" aria-label="Zoom in" className="flex items-center justify-center w-[22px] h-[21px] bg-[#f8f8f8]">
          <ZoomIcon />
        </button>
        <ToolButton label="Pan"><HandIcon /></ToolButton>
        <ToolButton label="Fit"><ShrinkIcon /></ToolButton>
        <ToolButton label="Zoom window"><FitIcon /></ToolButton>
        <ToolButton label="Rotate"><RotateIcon /></ToolButton>
        <span className="w-px h-4 mx-1.5 bg-[#999]" />
        <ToolButton label="Previous sheet">
          <Icon><path d="M11.500 2v12L4.500 8z" fill="#f0f0f0" stroke="#999" /></Icon>
        </ToolButton>
        <input
          aria-label="Sheet"
          defaultValue="1/2"
          className="w-[53px] h-[18px] ml-0.5 bg-white text-center text-xs border-t border-l border-[#696969] outline-none"
        />
        <ToolButton label="Next sheet">
          <Icon><path d="M5 1.500v13l7-6.500z" fill="#3aa0f4" stroke="#1868b8" /></Icon>
        </ToolButton>
        <ToolButton label="Print"><PrinterIcon /></ToolButton>
      </div>
      <div className="flex-1 min-h-0 bg-white overflow-hidden">
        <Drawing />
      </div>
    </section>
  )
}

function MyList() {
  return (
    <section className="flex flex-col w-[475px] shrink-0">
      <div className="flex items-center h-[22px] shrink-0 pt-0.5 border-b border-[#696969]">
        <ToolButton label="New list"><NewIcon /></ToolButton>
        <ToolButton label="Open list"><FolderIcon /></ToolButton>
        <ToolButton label="Save list"><SaveIcon /></ToolButton>
        <ToolButton label="Print list"><PrinterIcon /></ToolButton>
      </div>
      <div className="flex flex-1 min-h-0 ml-0.5 mr-0.5 bg-white border-l border-[#696969]">
        <div className="flex-1 pl-2.5 pr-2.5 pt-[15px] font-['DejaVu_Sans',Verdana,sans-serif] text-[13px]">
          <h2 className="font-['Liberation_Sans',Arial,sans-serif] text-[15px] leading-[18px] font-bold">MY LIST</h2>
          <table className="w-full table-fixed border-t border-b-2 border-black">
            <thead>
              <tr>
                <th className="w-[187px] pl-1.5 text-left font-normal leading-4">Part number</th>
                <th className="w-[172px] pl-1.5 text-left font-normal leading-4">Description</th>
                <th className="pl-1.5 text-left font-normal leading-4">Qty</th>
              </tr>
            </thead>
          </table>
        </div>
        <div className="flex flex-col justify-between w-[17px] pt-3.5 pb-[7px] bg-[#f8f8f8]">
          <ScrollArrow color="#bfbfbf" />
          <ScrollArrow down color="#bfbfbf" />
        </div>
      </div>
    </section>
  )
}

function PartsList() {
  return (
    <section className="flex flex-col flex-1 min-w-0 border-l-[3px] border-black">
      <div className="flex items-center h-[22px] shrink-0 pt-0.5 border-b border-[#999]">
        <button type="button" aria-label="Move" className="flex items-center justify-center w-5 h-5">
          <MoveIcon />
        </button>
        <span className="w-3" />
        <ToolButton label="Back"><ArrowIcon turn={0} /></ToolButton>
        <ToolButton label="Forward"><ArrowIcon turn={180} off /></ToolButton>
        <ToolButton label="Up"><ArrowIcon turn={90} /></ToolButton>
        <ToolButton label="Down"><ArrowIcon turn={270} /></ToolButton>
        <ToolButton label="Print parts list"><PrinterIcon /></ToolButton>
        <div className="relative w-[86px] h-[19px] ml-[62px] bg-white border border-[#808080]">
          <select aria-label="Language" className="w-full h-full appearance-none outline-none text-[11px] leading-4 text-black">
            <option>English</option>
          </select>
          <span className="absolute right-0 top-0 flex items-center justify-center w-4 h-[17px] bg-[#f0f0f0] border-r border-b border-[#696969] pointer-events-none">
            <svg className="w-[7px] h-1" viewBox="0 0 7 4" aria-hidden="true"><path d="M0 0h7L3.500 4z" /></svg>
          </span>
        </div>
      </div>
      <div className="flex flex-1 min-h-0 bg-white">
        <div className="flex-1 min-w-0 overflow-hidden pl-[9px] pr-[11px] pt-4 font-['DejaVu_Sans',Verdana,sans-serif] text-[13px]">
          <div className="flex items-start h-[23px]">
            <h2 className="w-1/2 pl-px font-['Liberation_Sans',Arial,sans-serif] text-[15px] leading-[18px] font-bold">DRIVELINE</h2>
            <p className="leading-5">DRIVELINE INST-MT431B.436B</p>
          </div>
          <table className="w-full table-fixed border-collapse">
            <thead>
              <tr className="h-[18px] border-y border-black text-left leading-4 [&>th]:font-normal [&>th]:p-0">
                <th className="w-[100px]"><span className="pl-1.5">To list</span></th>
                <th className="w-[135px] text-right">Ref no</th>
                <th className="w-[250px]"><span className="pl-9">Part number</span></th>
                <th className="w-[104px]">Qty</th>
                <th className="w-[272px]">Description</th>
                <th className="w-[104px]">Link</th>
                <th>Remarks</th>
              </tr>
            </thead>
            <tbody>
              {parts.map(p => (
                <tr key={p.ref} className="h-[19px] leading-[19px]">
                  <td className="pl-1.5 align-top">
                    <button type="button" aria-label={`Add ${p.no} to list`} className="block">
                      <AddToListIcon />
                    </button>
                  </td>
                  <td className="text-right">{p.ref}</td>
                  <td className="pl-9">{p.no}</td>
                  <td>{p.qty}</td>
                  <td>{p.desc}</td>
                  <td>
                    {p.link && (
                      <a href={`#part-${p.ref}`} aria-label={`Open ${p.desc} ${p.no}`} className="block w-4">
                        <LinkIcon />
                      </a>
                    )}
                  </td>
                  <td>{p.remarks}</td>
                </tr>
              ))}
            </tbody>
          </table>
        </div>
        <div className="flex flex-col w-[13px] overflow-hidden pt-3.5 pb-[7px] bg-[#f0f0f0]">
          <ScrollArrow color="#555" />
          <div className="h-[77px] mt-1 bg-[#cdcdcd]" />
          <span className="flex-1" />
          <ScrollArrow down color="#555" />
        </div>
      </div>
    </section>
  )
}

export default function App() {
  return (
    <div className="flex flex-col h-screen overflow-hidden bg-[#f0f0f0] text-black text-[11px] font-['Liberation_Sans',Arial,sans-serif]">
      <header className="flex h-[37px] shrink-0 font-['Open_Sans','Segoe_UI',sans-serif] text-xs">
        <button type="button" className="flex flex-col items-center w-10 pt-0.5 leading-4">
          <FolderIcon />
          Open
        </button>
        <button type="button" className="flex flex-col items-center w-10 pt-0.5 leading-4">
          <BubbleIcon mark="?" />
          Help
        </button>
        <button type="button" className="flex flex-col items-center w-10 pt-0.5 leading-4">
          <BubbleIcon mark="!" />
          About
        </button>
      </header>
      <main className="flex flex-col flex-1 min-h-0">
        <div className="flex flex-1 min-h-0">
          <LeftPane />
          <Viewer />
        </div>
        <div className="flex h-[302px] shrink-0 border-t-2 border-black">
          <MyList />
          <PartsList />
        </div>
      </main>
    </div>
  )
}
